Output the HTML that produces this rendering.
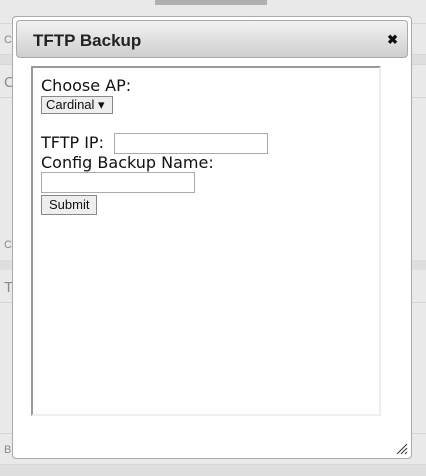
<!DOCTYPE html>
<html><head><style>
*{margin:0;padding:0;box-sizing:border-box}
body{width:426px;height:476px;background:#e9e9e9;position:relative;overflow:hidden;font-family:"Liberation Sans",sans-serif}
.l{position:absolute;left:0;width:426px;height:1px;background:#d6d6d6}
.b{position:absolute;left:0;width:426px;background:#dedede}
.t{position:absolute;left:4px;color:#8a8a8a;font-size:11px}
#dlg{position:absolute;left:12px;top:16px;width:400px;height:443px;background:#fff;border:1px solid #aaa;border-radius:4px}
#tb{position:absolute;left:3px;top:3px;width:392px;height:38px;border:1px solid #aaa;border-radius:4px;background:linear-gradient(#f2f2f2,#cfcfcf)}
#tb span{position:absolute;left:16px;top:10px;font-weight:bold;font-size:17px;color:#222}
#tb i{position:absolute;right:9px;top:11px;font-style:normal;font-weight:bold;font-size:13px;color:#111}
#fr{position:absolute;left:18px;top:49px;width:350px;height:350px;border:2px solid;border-color:#999 #eee #eee #999;padding:9px 8px;font-family:"DejaVu Sans",sans-serif;font-size:16px;color:#111;line-height:18px}
.sel{display:inline-block;border:1px solid #888;background:#eee;height:18px;line-height:16px;padding:0 4px;width:72px;font-size:13px;font-family:"Liberation Sans",sans-serif}
.in{display:inline-block;border:1px solid #aaa;height:21px;vertical-align:middle}
.btn{display:inline-block;border:1px solid #888;background:#eee;height:20px;line-height:18px;padding:0 7px;font-size:13px;font-family:"Liberation Sans",sans-serif}
</style></head><body>
<div style="position:absolute;left:155px;top:0;width:112px;height:5px;background:#b0b0b0"></div>
<div class="l" style="top:23px"></div>
<div class="l" style="top:54px"></div>
<div class="b" style="top:55px;height:9px"></div>
<div class="l" style="top:64px"></div>
<div class="l" style="top:97px"></div>
<div class="l" style="top:260px"></div>
<div class="b" style="top:260px;height:10px"></div>
<div class="l" style="top:302px"></div>
<div class="l" style="top:433px"></div>
<div class="l" style="top:464px"></div>
<div class="b" style="top:465px;height:11px"></div>
<div class="t" style="top:34px">C</div>
<div class="t" style="top:74px;font-size:15px">C</div>
<div class="t" style="top:239px">C</div>
<div class="t" style="top:279px;font-size:15px">T</div>
<div class="t" style="top:444px">B</div>
<div id="dlg">
<div id="tb"><span>TFTP Backup</span><i>✖</i></div>
<div id="fr">
<div>Choose AP:</div>
<div><span class="sel">Cardinal ▾</span></div>
<div style="margin-top:19px">TFTP IP: <span class="in" style="width:154px;margin-left:5px"></span></div>
<div>Config Backup Name:</div>
<div><span class="in" style="width:154px"></span></div>
<div style="margin-top:2px"><span class="btn">Submit</span></div>
</div>
<svg style="position:absolute;right:3px;bottom:3px" width="12" height="12"><path d="M1 11L11 1M5 11L11 5M9 11L11 9" stroke="#333" stroke-width="1"/></svg>
</div>
</body></html>
